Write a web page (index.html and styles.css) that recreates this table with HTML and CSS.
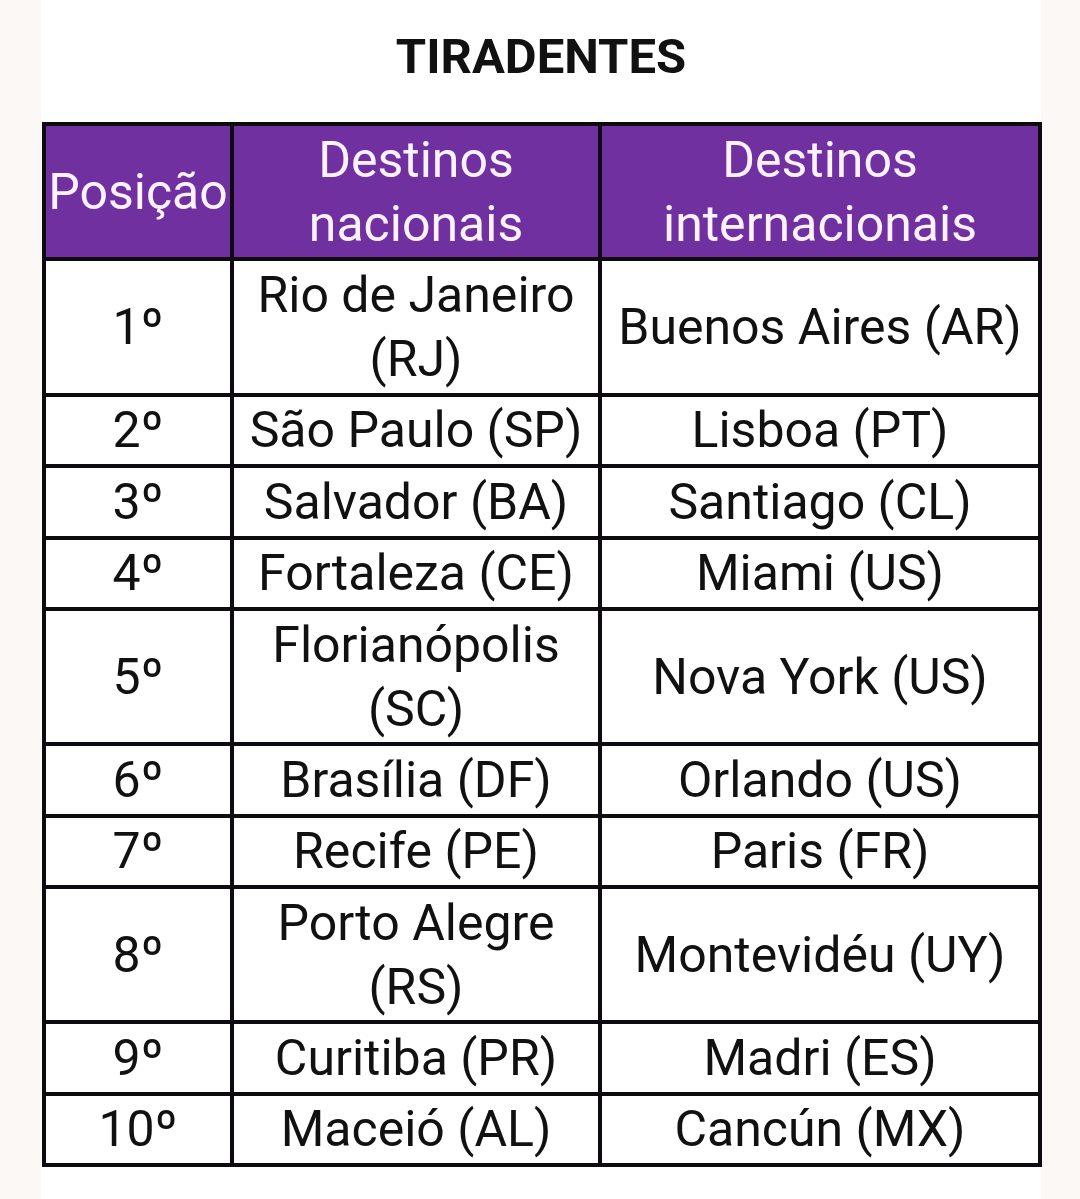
FILE: index.html
```html
<!DOCTYPE html>
<html lang="pt-BR">
<head>
<meta charset="utf-8">
<title>Tiradentes</title>
<link rel="stylesheet" href="styles.css">
</head>
<body>
<div class="page">
  <h1 class="title">TIRADENTES</h1>
  <table class="ranking">
    <colgroup>
      <col class="c-pos">
      <col class="c-nac">
      <col class="c-int">
    </colgroup>
    <thead>
      <tr>
        <th>Posição</th>
        <th>Destinos<br>nacionais</th>
        <th>Destinos<br>internacionais</th>
      </tr>
    </thead>
    <tbody>
      <tr><td>1º</td><td>Rio de Janeiro<br>(RJ)</td><td>Buenos Aires (AR)</td></tr>
      <tr><td>2º</td><td>São Paulo (SP)</td><td>Lisboa (PT)</td></tr>
      <tr><td>3º</td><td>Salvador (BA)</td><td>Santiago (CL)</td></tr>
      <tr><td>4º</td><td>Fortaleza (CE)</td><td>Miami (US)</td></tr>
      <tr><td>5º</td><td>Florianópolis<br>(SC)</td><td>Nova York (US)</td></tr>
      <tr><td>6º</td><td>Brasília (DF)</td><td>Orlando (US)</td></tr>
      <tr><td>7º</td><td>Recife (PE)</td><td>Paris (FR)</td></tr>
      <tr><td>8º</td><td>Porto Alegre<br>(RS)</td><td>Montevidéu (UY)</td></tr>
      <tr><td>9º</td><td>Curitiba (PR)</td><td>Madri (ES)</td></tr>
      <tr><td>10º</td><td>Maceió (AL)</td><td>Cancún (MX)</td></tr>
    </tbody>
  </table>
</div>
</body>
</html>
```

FILE: styles.css
```css
html, body {
  margin: 0;
  padding: 0;
}
body {
  background: #fcf8f6;
  font-family: Roboto, "Liberation Sans", sans-serif;
  color: #111;
}
.page {
  width: 1000px;
  margin-left: 41px;
  min-height: 1199px;
  background: #ffffff;
  padding-top: 29px;
  box-sizing: border-box;
}
.title {
  margin: 0;
  font-size: 49px;
  line-height: 56px;
  font-weight: 700;
  text-align: center;
  color: #111;
  height: 93px;
}
.ranking {
  margin-left: 1px;
  width: 996px;
  table-layout: fixed;
  border-collapse: collapse;
  border: 4px solid #0d0a10;
}
.c-pos { width: 188px; }
.c-nac { width: 368px; }
.c-int { width: 440px; }
.ranking th,
.ranking td {
  border: 4px solid #0d0a10;
  padding: 1.7px 0 1.7px;
  font-size: 50px;
  line-height: 64px;
  font-weight: 400;
  text-align: center;
  vertical-align: middle;
  white-space: nowrap;
}
.ranking th {
  background: #7030a0;
  color: #fbf2fb;
}
.ranking td {
  background: #ffffff;
  color: #111;
}
```
